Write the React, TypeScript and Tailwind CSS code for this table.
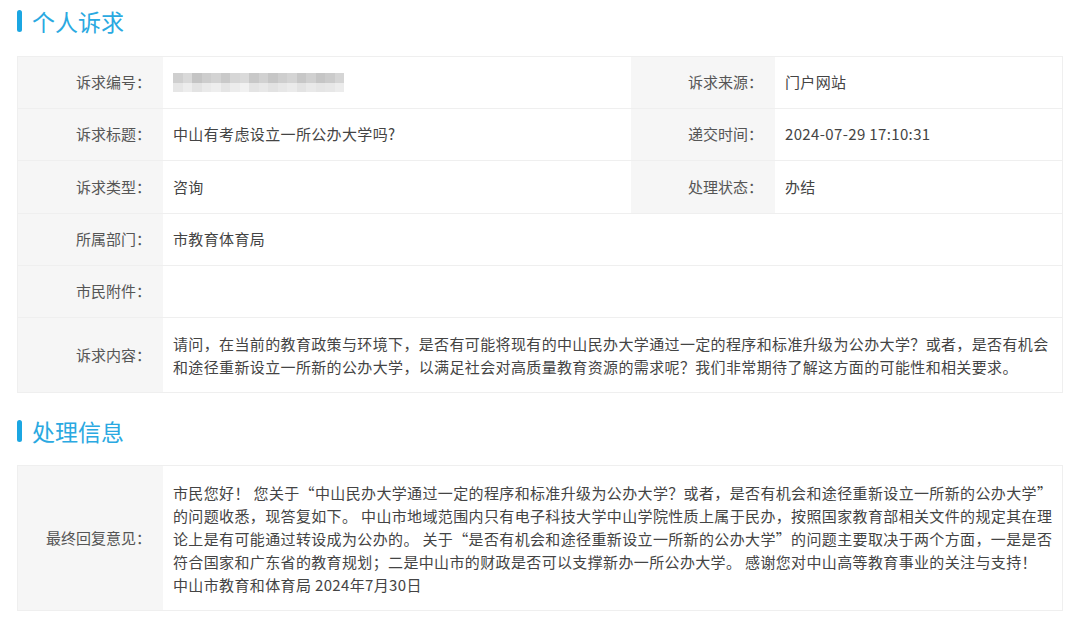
import type { ReactNode } from "react";

const FONT = "font-['Microsoft_YaHei','Noto_Sans_CJK_SC',sans-serif]";

// mosaic over the redacted case number
const BLUR_TOP = ["#cfcfcf", "#d9d9d9", "#c4c4c4", "#cdcdcd", "#d3d3d3", "#c9c9c9", "#d6d6d6", "#dadada", "#c8c8c8", "#d1d1d1", "#c6c6c6", "#cecece", "#d4d4d4", "#c7c7c7", "#d0d0d0", "#c5c5c5", "#cbcbcb", "#d5d5d5"];
const BLUR_BOTTOM = ["#e6e6e6", "#ededed", "#e3e3e3", "#eaeaea", "#eeeeee", "#e5e5e5", "#ececec", "#f1f1f1", "#e4e4e4", "#e8e8e8", "#e2e2e2", "#e7e7e7", "#ebebeb", "#e3e3e3", "#e9e9e9", "#e5e5e5", "#e7e7e7", "#ececec"];

const CONTENT_LINES = [
  "请问，在当前的教育政策与环境下，是否有可能将现有的中山民办大学通过一定的程序和标准升级为公办大学？或者，是否有机会",
  "和途径重新设立一所新的公办大学，以满足社会对高质量教育资源的需求呢？我们非常期待了解这方面的可能性和相关要求。",
];

const REPLY_LINES = [
  "市民您好！ 您关于“中山民办大学通过一定的程序和标准升级为公办大学？或者，是否有机会和途径重新设立一所新的公办大学”",
  "的问题收悉，现答复如下。 中山市地域范围内只有电子科技大学中山学院性质上属于民办，按照国家教育部相关文件的规定其在理",
  "论上是有可能通过转设成为公办的。 关于“是否有机会和途径重新设立一所新的公办大学”的问题主要取决于两个方面，一是是否",
  "符合国家和广东省的教育规划；二是中山市的财政是否可以支撑新办一所公办大学。 感谢您对中山高等教育事业的关注与支持！",
  "中山市教育和体育局 2024年7月30日",
];

function SectionTitle({ title }: { title: string }) {
  return (
    <div className="flex h-[42px] items-center gap-[10px] pl-[17px]">
      <span className="h-[22px] w-[5px] rounded-full bg-[#1ba6e2]" />
      <h2 className="text-[23px] leading-none text-[#2aa9e1]">{title}</h2>
    </div>
  );
}

function Label({ children, w = "w-[145px]" }: { children: ReactNode; w?: string }) {
  return (
    <div className={`${w} flex shrink-0 items-center justify-end bg-[#f6f6f6] pr-[12px] text-[#555]`}>
      {children}
    </div>
  );
}

function Value({ children, className = "" }: { children?: ReactNode; className?: string }) {
  return <div className={`flex min-w-0 items-center bg-white pl-[10px] tracking-[0.36px] text-[#444] ${className}`}>{children}</div>;
}

function Blur() {
  return (
    <div className="flex flex-col">
      <div className="flex">{BLUR_TOP.map((c, i) => <span key={i} className="h-[10px] w-[9.5px]" style={{ background: c }} />)}</div>
      <div className="flex">{BLUR_BOTTOM.map((c, i) => <span key={i} className="h-[9px] w-[9.5px]" style={{ background: c }} />)}</div>
    </div>
  );
}

export default function App() {
  return (
    <div className={`${FONT} min-h-[625px] w-[1080px] bg-white pr-[17px] text-[15px]`}>
      <SectionTitle title="个人诉求" />

      <div className="ml-[17px] mt-[14px] border border-[#efefef]">
        <div className="flex h-[52px] border-b border-[#efefef]">
          <Label>诉求编号：</Label>
          <Value className="w-[468px]"><Blur /></Value>
          <Label w="w-[144px]">诉求来源：</Label>
          <Value className="flex-1">门户网站</Value>
        </div>
        <div className="flex h-[52px] border-b border-[#efefef]">
          <Label>诉求标题：</Label>
          <Value className="w-[468px]">中山有考虑设立一所公办大学吗?</Value>
          <Label w="w-[144px]">递交时间：</Label>
          <Value className="flex-1">2024-07-29 17:10:31</Value>
        </div>
        <div className="flex h-[53px] border-b border-[#efefef]">
          <Label>诉求类型：</Label>
          <Value className="w-[468px]">咨询</Value>
          <Label w="w-[144px]">处理状态：</Label>
          <Value className="flex-1">办结</Value>
        </div>
        <div className="flex h-[52px] border-b border-[#efefef]">
          <Label>所属部门：</Label>
          <Value className="flex-1">市教育体育局</Value>
        </div>
        <div className="flex h-[52px] border-b border-[#efefef]">
          <Label>市民附件：</Label>
          <Value className="flex-1" />
        </div>
        <div className="flex h-[74px]">
          <Label>诉求内容：</Label>
          <Value className="flex-1">
            <div className="leading-[23px]">
              {CONTENT_LINES.map((l) => <div key={l} className="whitespace-nowrap">{l}</div>)}
            </div>
          </Value>
        </div>
      </div>

      <div className="mt-[17px]">
        <SectionTitle title="处理信息" />
      </div>

      <div className="ml-[17px] mt-[13px] flex h-[146px] border border-[#efefef]">
        <Label>最终回复意见：</Label>
        <Value className="flex-1">
          <div className="leading-[23px]">
            {REPLY_LINES.map((l) => <div key={l} className="whitespace-nowrap">{l}</div>)}
          </div>
        </Value>
      </div>
    </div>
  );
}
